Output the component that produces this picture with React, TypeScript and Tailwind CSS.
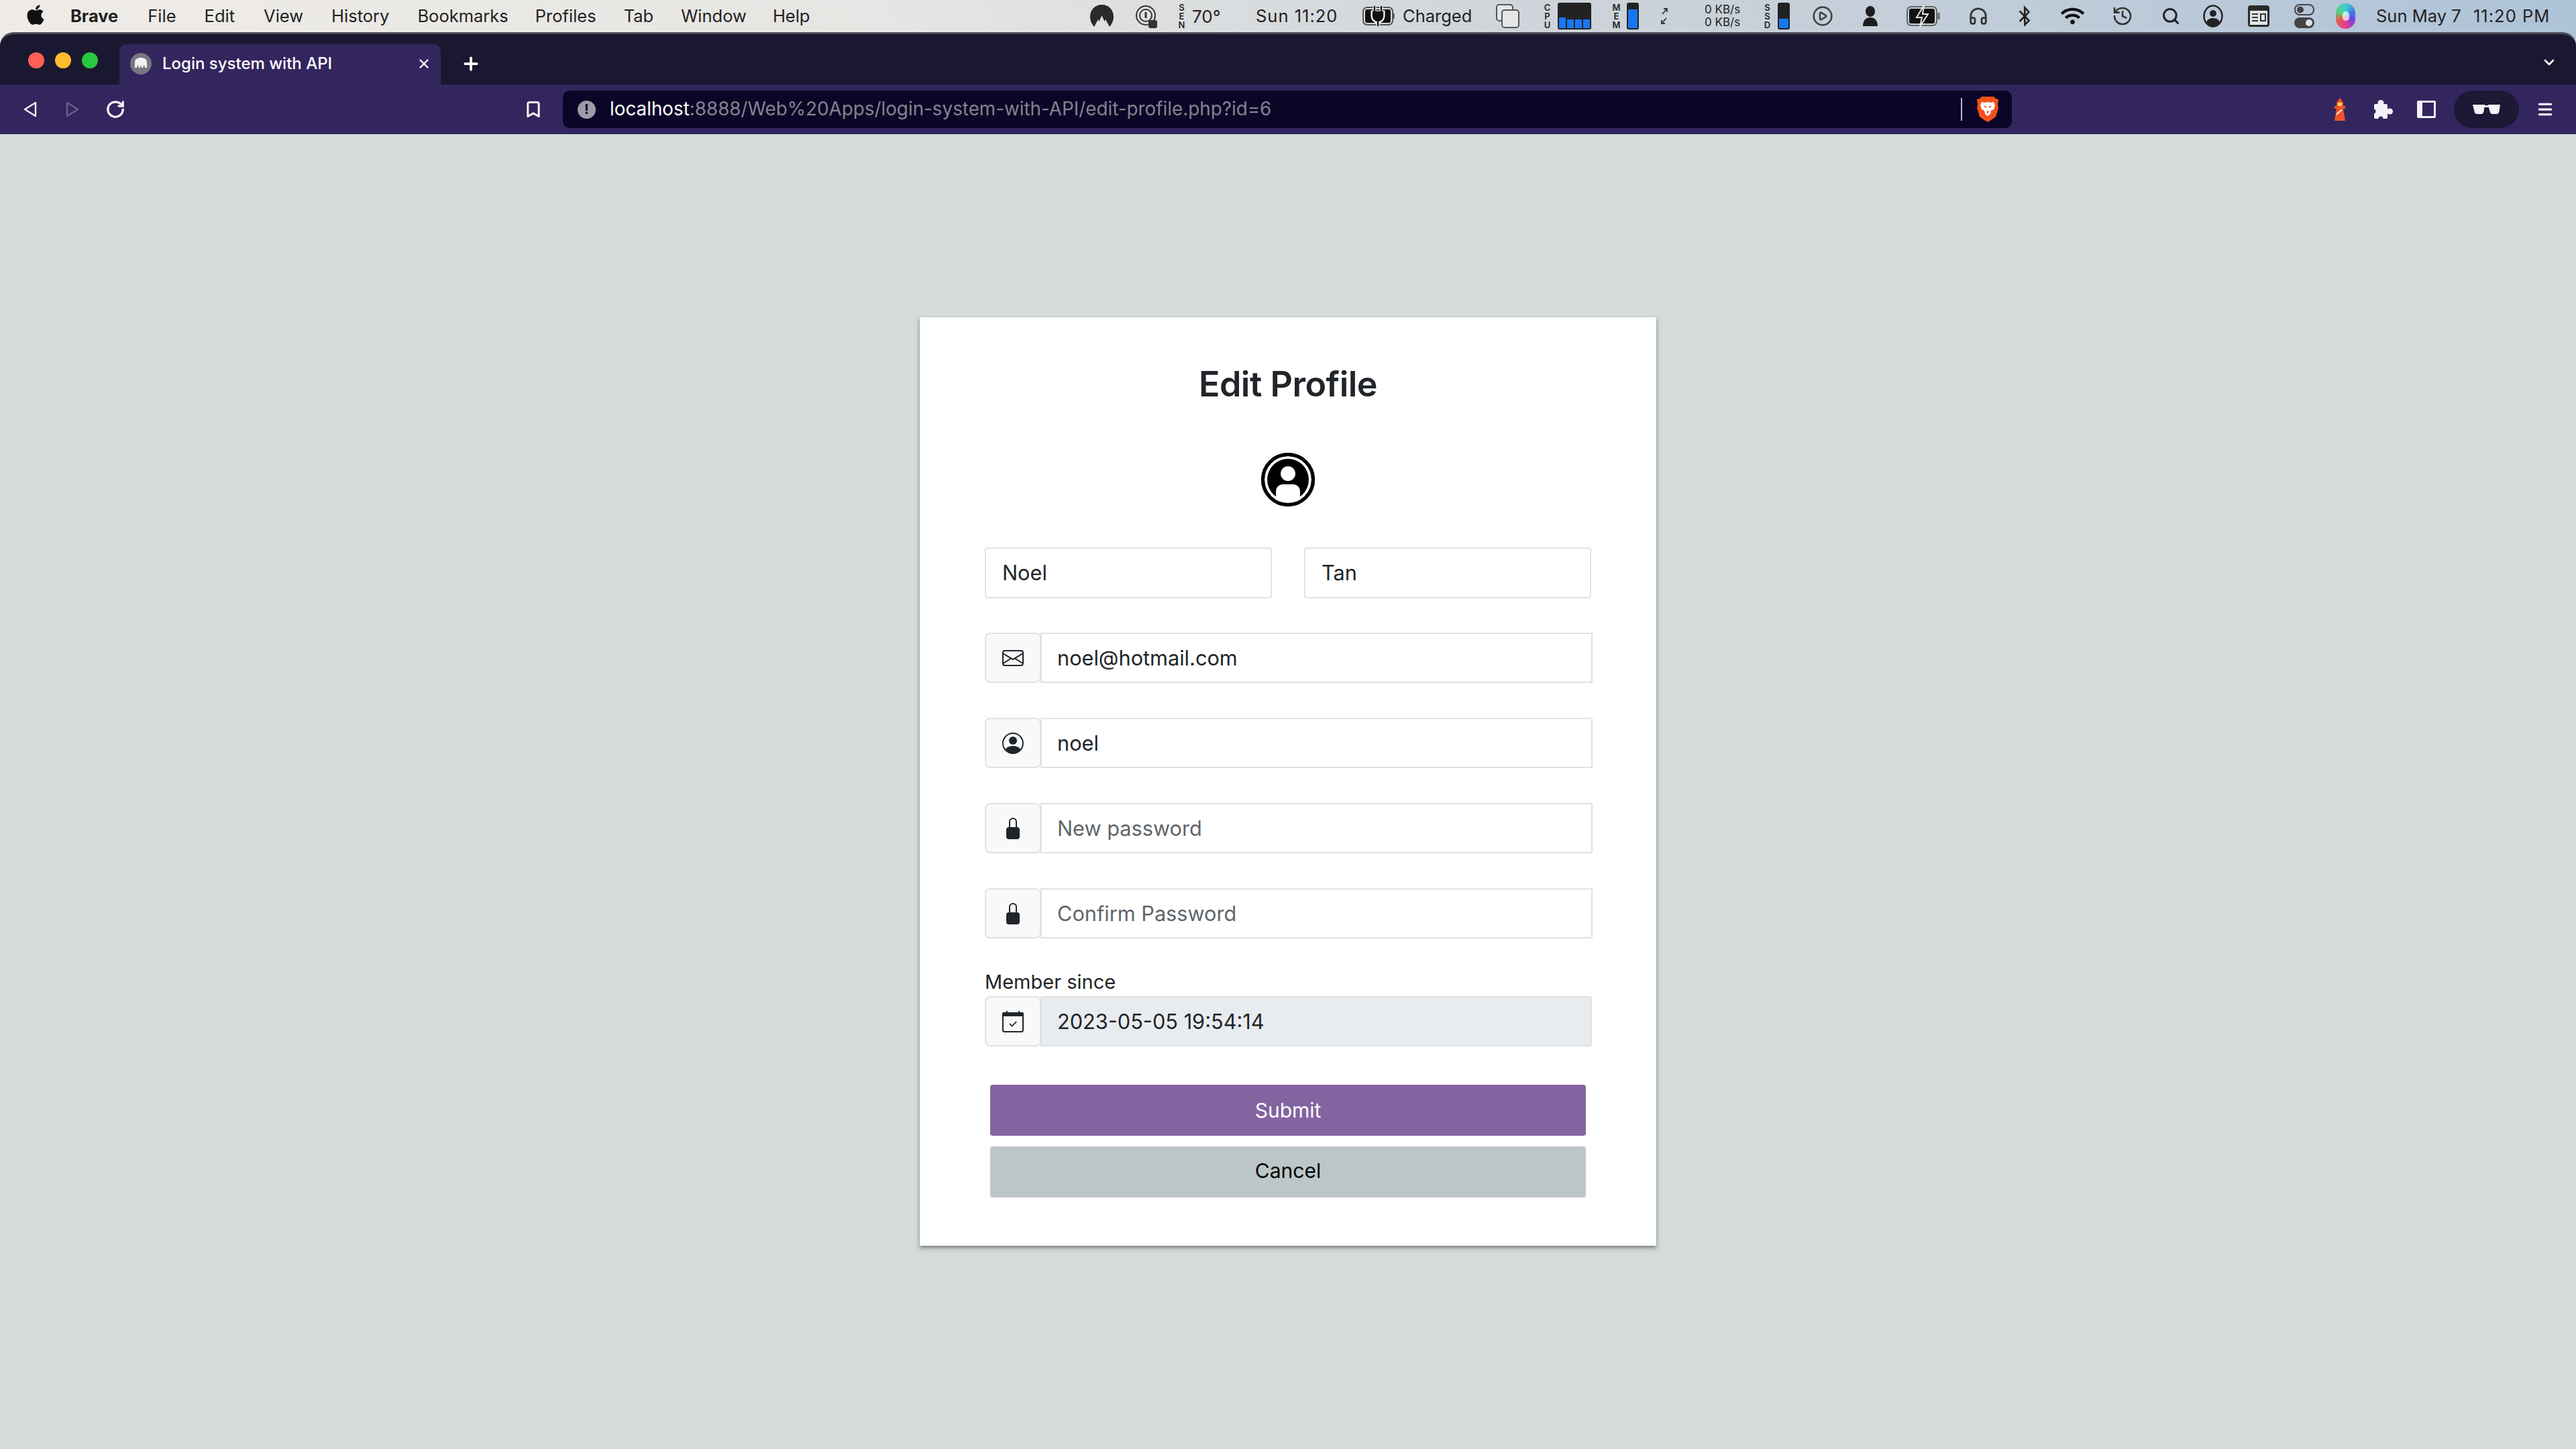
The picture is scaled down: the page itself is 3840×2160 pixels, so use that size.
import React from "react";
import { FaApple, FaWifi, FaBluetoothB } from "react-icons/fa";
import { BsEnvelope, BsPersonCircle, BsLockFill } from "react-icons/bs";
import { CirclePlay, Headphones, History, Search, Plus, X, ChevronDown, RotateCw, Bookmark, Menu } from "lucide-react";

const font = "font-['Inter','Liberation_Sans',sans-serif]";

function StackLabel({ letters, className }: { letters: string; className?: string }) {
  return (
    <div className={"w-[11px] flex flex-col items-center text-[13px] leading-[13px] font-semibold text-[#222] " + (className ?? "")}>
      {letters.split("").map((l, i) => (
        <span key={i}>{l}</span>
      ))}
    </div>
  );
}

function Bar({ className, fill }: { className?: string; fill: string }) {
  return (
    <div className={"w-[18px] h-[40px] bg-[#222] rounded-[3px] flex flex-col justify-end p-[2px] " + (className ?? "")}>
      <div className={"w-full bg-[#1677f2] " + fill} />
    </div>
  );
}

function MenuBar() {
  const items: [string, string][] = [
    ["File", "ml-[44px]"],
    ["Edit", "ml-[42px]"],
    ["View", "ml-[43px]"],
    ["History", "ml-[42px]"],
    ["Bookmarks", "ml-[42px]"],
    ["Profiles", "ml-[40px]"],
    ["Tab", "ml-[41px]"],
    ["Window", "ml-[41px]"],
    ["Help", "ml-[39px]"],
  ];
  return (
    <div className="h-[48px] flex items-center justify-between text-[25.5px] text-[#222] whitespace-nowrap">
      <div className="flex items-center pl-[38px]">
        <FaApple className="w-[30px] h-[34px] text-[#111] mb-[4px]" />
        <span className="ml-[37px] font-bold">Brave</span>
        {items.map(([t, m]) => (
          <span key={t} className={m}>
            {t}
          </span>
        ))}
      </div>
      <div className="flex items-center pr-[38px]">
        <svg viewBox="0 0 37 36" className="w-[37px] h-[36px]">
          <path d="M18.5 1C8 1 1 9 1 19c0 6 2.5 11 6 15l6-11 1.5 3 4-9 4 9 1.5-3 6 11c3.500-4 6-9 6-15C36 9 29 1 18.500 1z" fill="#2a2a2a" />
        </svg>
        <svg viewBox="0 0 32 36" className="ml-[32px] w-[32px] h-[36px]" fill="none" stroke="#333" strokeWidth="2">
          <circle cx="15" cy="17" r="14" />
          <circle cx="15" cy="17" r="9" />
          <path d="M15 12v9" strokeWidth="3" />
          <rect x="20" y="25" width="11" height="10" rx="2" fill="#333" />
        </svg>
        <StackLabel letters="SEN" className="ml-[31px]" />
        <span className="ml-[10px] w-[44px] text-[26px]">70°</span>
        <span className="ml-[51px] w-[125px] tracking-[1px]">Sun 11:20</span>
        <svg viewBox="0 0 50 32" className="ml-[34px] w-[50px] h-[32px]">
          <rect x="1" y="3" width="44" height="26" rx="6" fill="none" stroke="#555" strokeWidth="2" />
          <rect x="4" y="6" width="38" height="20" rx="3" fill="#111" />
          <path d="M18 1v9M28 1v9M15 10h16v6a8 8 0 0 1-16 0zM23 22v9" stroke="#fff" strokeWidth="5" fill="none" />
          <path d="M18 1v9M28 1v9M16 10h14v6a7 7 0 0 1-14 0zM23 22v9" stroke="#111" strokeWidth="2.500" fill="#111" />
          <path d="M47 12v8" stroke="#666" strokeWidth="2" />
        </svg>
        <span className="ml-[10px] w-[103px]">Charged</span>
        <svg viewBox="0 0 35 36" className="ml-[36px] w-[35px] h-[36px]" fill="#e4e6e8" stroke="#555" strokeWidth="2">
          <rect x="1" y="1" width="24" height="24" rx="4" />
          <rect x="9" y="9" width="25" height="26" rx="4" />
        </svg>
        <StackLabel letters="CPU" className="ml-[36px]" />
        <div className="ml-[10px] w-[50px] h-[40px] bg-[#222] rounded-[3px] flex items-end gap-[2px] p-[2px]">
          <div className="flex-1 h-[16px] bg-[#1677f2]" />
          <div className="flex-1 h-[13px] bg-[#1677f2]" />
          <div className="flex-1 h-[13px] bg-[#1677f2]" />
          <div className="flex-1 h-[13px] bg-[#1677f2]" />
        </div>
        <StackLabel letters="MEM" className="ml-[32px]" />
        <Bar className="ml-[10px]" fill="h-[28px]" />
        <svg viewBox="0 0 12 26" className="ml-[32px] w-[12px] h-[26px]" fill="none" stroke="#333" strokeWidth="1.800">
          <path d="M3 10L10 2M5 2h5v5M9 16L2 24M2 19v5h5" />
        </svg>
        <div className="ml-[54px] w-[56px] flex flex-col text-[17px] leading-[19px] text-[#222] whitespace-nowrap">
          <span>0 KB/s</span>
          <span>0 KB/s</span>
        </div>
        <StackLabel letters="SSD" className="ml-[32px]" />
        <Bar className="ml-[10px]" fill="h-[14px]" />
        <CirclePlay className="ml-[33px] w-[32px] h-[32px] text-[#444]" strokeWidth={2} />
        <svg viewBox="0 0 24 32" className="ml-[43px] w-[24px] h-[32px]" fill="#1c1c1c">
          <ellipse cx="12" cy="9" rx="7" ry="8" />
          <path d="M1 31c0-8 4-13 11-13s11 5 11 13z" />
        </svg>
        <svg viewBox="0 0 52 34" className="ml-[42px] w-[52px] h-[34px]">
          <rect x="1" y="3" width="44" height="28" rx="6" fill="none" stroke="#666" strokeWidth="2" />
          <rect x="4" y="6" width="38" height="22" rx="3" fill="#111" />
          <path d="M26 1L15 19h8l-3 14 12-19h-8z" fill="#111" stroke="#e2e4e6" strokeWidth="2" />
          <path d="M48 12v10" stroke="#666" strokeWidth="3" />
        </svg>
        <Headphones className="ml-[40px] w-[30px] h-[34px] text-[#333]" strokeWidth={2.2} />
        <FaBluetoothB className="ml-[44px] w-[20px] h-[34px] text-[#222]" />
        <FaWifi className="ml-[44px] w-[35px] h-[30px] text-[#111]" />
        <History className="ml-[41px] w-[32px] h-[34px] text-[#333]" strokeWidth={2} />
        <Search className="ml-[42px] w-[28px] h-[30px] text-[#222]" strokeWidth={2.6} />
        <svg viewBox="0 0 30 34" className="ml-[34px] w-[30px] h-[34px]">
          <ellipse cx="15" cy="17" rx="13.500" ry="15.500" fill="none" stroke="#222" strokeWidth="2.500" />
          <circle cx="15" cy="13" r="5" fill="#222" />
          <path d="M5 26c2-5 6-6 10-6s8 1 10 6c-3 4-7 6-10 6s-7-2-10-6z" fill="#222" />
        </svg>
        <svg viewBox="0 0 32 34" className="ml-[37px] w-[32px] h-[34px]">
          <rect x="0" y="1" width="32" height="32" rx="4" fill="#2a2a2a" />
          <rect x="3" y="9" width="26" height="21" fill="#dfe4e8" />
          <path d="M6 14h9M6 19h9M6 24h9M19 14h7v10h-7z" stroke="#333" strokeWidth="2" fill="none" />
        </svg>
        <svg viewBox="0 0 30 38" className="ml-[37px] w-[30px] h-[38px]">
          <rect x="1" y="2" width="28" height="15" rx="7" fill="none" stroke="#444" strokeWidth="2" />
          <circle cx="9" cy="9.500" r="5" fill="#444" />
          <rect x="0" y="21" width="30" height="16" rx="8" fill="#444" />
          <circle cx="22" cy="29" r="5" fill="#dfe4e8" />
        </svg>
        <div className="ml-[32px] w-[29px] h-[38px] rounded-full bg-[conic-gradient(#3fd0c8,#3a7bea,#7a3fe0,#e0408f,#e85a4f,#5ad07a,#3fd0c8)] flex items-center justify-center">
          <div className="w-[10px] h-[14px] rounded-full bg-white/70" />
        </div>
        <span className="ml-[31px] w-[127px]">Sun May 7</span>
        <span className="ml-[18px] w-[115px] tracking-[1px]">11:20 PM</span>
      </div>
    </div>
  );
}

function BrowserChrome() {
  return (
    <div className="rounded-t-[20px] overflow-hidden border-t-[3px] border-[#4b4a55]">
      <div className="h-[75px] bg-[#1a1830] flex items-end relative">
        <div className="flex items-center gap-[16px] pl-[42px] h-[75px] pb-[24px] pt-[27px]">
          <div className="w-[24px] h-[24px] rounded-full bg-[#fe5f57]" />
          <div className="w-[24px] h-[24px] rounded-full bg-[#febc2e]" />
          <div className="w-[24px] h-[24px] rounded-full bg-[#28c840]" />
        </div>
        <div className="ml-[32px] w-[479px] h-[60px] bg-[#33265e] rounded-t-[10px] flex items-center pl-[16px] pr-[14px] pb-[2px] text-white text-[24px] font-medium">
          <svg viewBox="0 0 32 32" className="w-[32px] h-[32px] shrink-0">
            <circle cx="16" cy="16" r="16" fill="#77787f" />
            <path d="M7 22V14c0-5 4-7 9-7s9 2 9 7v8h-3l-1-5-2 5h-2l-1-5-1 5h-2l-2-5-1 5z" fill="#f2f2f2" />
          </svg>
          <span className="ml-[16px] whitespace-nowrap">Login system with API</span>
          <X className="ml-auto w-[22px] h-[22px] text-white" strokeWidth={2.6} />
        </div>
        <Plus className="ml-[30px] mb-[16px] w-[30px] h-[30px] text-white self-end" strokeWidth={3} />
        <ChevronDown className="ml-auto mr-[28px] mb-[21px] w-[24px] h-[24px] text-white" strokeWidth={2.6} />
      </div>
      <div className="h-[74px] bg-[#33265e] flex items-center">
        <svg viewBox="0 0 20 24" className="ml-[35px] w-[20px] h-[24px]" fill="none" stroke="#f3f2f6" strokeWidth="2.400" strokeLinejoin="round">
          <path d="M18 2v20L2 12z" />
        </svg>
        <svg viewBox="0 0 20 24" className="ml-[43px] w-[20px] h-[24px]" fill="none" stroke="#6a5f8e" strokeWidth="2.400" strokeLinejoin="round">
          <path d="M2 2v20l16-10z" />
        </svg>
        <RotateCw className="ml-[39px] w-[30px] h-[30px] text-[#f3f2f6]" strokeWidth={2.6} />
        <Bookmark className="ml-[594px] w-[28px] h-[30px] text-[#f3f2f6]" strokeWidth={2.6} />
        <div className="ml-[30px] w-[2160px] h-[56px] bg-[#0b0627] rounded-[10px] flex items-center pl-[22px]">
          <div className="w-[27px] h-[27px] rounded-full bg-[#9b9ca6] flex items-center justify-center text-[#0b0627] text-[20px] font-bold leading-none">!</div>
          <span className="ml-[21px] text-[27.8px] whitespace-nowrap">
            <span className="text-white">localhost</span>
            <span className="text-[#86828f]">:8888/Web%20Apps/login-system-with-API/edit-profile.php?id=6</span>
          </span>
          <div className="ml-auto w-[2px] h-[34px] bg-[#b9b7c0]" />
          <svg viewBox="0 0 34 40" className="ml-[21px] mr-[19px] w-[34px] h-[40px]">
            <path d="M8 1h18l3 3 4 1-1 8 1 5-4 13-7 5-5 3-5-3-7-5L1 18l1-5-1-8 4-1z" fill="#f1511b" />
            <path d="M8 9l5 1 4-1 4 1 5-1 2 5-2 6-4 2-1 5-4 3-4-3-1-5-4-2-2-6z" fill="#fff" />
            <path d="M12 15l3 2M22 15l-3 2M17 22v4" stroke="#f1511b" strokeWidth="2" />
          </svg>
        </div>
        <svg viewBox="0 0 22 34" className="ml-[478px] w-[22px] h-[34px]">
          <path d="M11 0l5 7v5h3v4h-3l3 18H3l3-18H3v-4h3V7z" fill="#f4522a" />
          <rect x="8" y="7" width="6" height="5" fill="#f5d75a" />
          <path d="M15 18l-9 8v-3l7-6z" fill="#f8e6df" />
        </svg>
        <svg viewBox="0 0 30 28" className="ml-[38px] w-[30px] h-[28px]" fill="#f3f2f6">
          <rect x="2" y="6" width="20" height="22" rx="2" />
          <circle cx="12" cy="4.500" r="4.500" />
          <circle cx="25.500" cy="17" r="4.500" />
          <circle cx="1" cy="17" r="3.500" fill="#33265e" />
          <circle cx="12" cy="28" r="3.500" fill="#33265e" />
        </svg>
        <div className="ml-[36px] w-[28px] h-[26px] border-[3px] border-[#f3f2f6] border-l-[8px] rounded-[2px]" />
        <div className="ml-[27px] w-[97px] h-[56px] rounded-full bg-[#1c1836] flex items-center justify-center">
          <svg viewBox="0 0 41 14" className="w-[41px] h-[14px]" fill="#f3f2f6">
            <path d="M0 0h18l-1.500 10c-.3 2.500-2 4-4 4h-6c-2 0-3.700-1.500-4-4z" />
            <path d="M23 0h18l-1.500 10c-.3 2.500-2 4-4 4h-6c-2 0-3.700-1.500-4-4z" />
            <rect x="16" y="1" width="9" height="3" />
          </svg>
        </div>
        <Menu className="ml-[26px] w-[26px] h-[30px] text-[#f3f2f6]" strokeWidth={3} />
      </div>
    </div>
  );
}

function Group({ icon, children, disabled, muted, mt }: { icon: React.ReactNode; children: React.ReactNode; disabled?: boolean; muted?: boolean; mt: string }) {
  return (
    <div className={"flex h-[75px] " + mt}>
      <div className="w-[84px] shrink-0 rounded-[8px] border-2 border-[#dee2e6] bg-[#f8f9fa] flex items-center justify-center text-[#212529]">
        {icon}
      </div>
      <div
        className={
          "-ml-px flex items-center pl-[23px] pt-[1px] text-[30.7px] border-2 border-[#dee2e6] " +
          (disabled ? "w-[822px] bg-[#e9ecef] rounded-r-[4px] " : "w-[823px] bg-white ") +
          (muted ? "text-[#5f656b]" : "text-[#212529]")
        }
      >
        {children}
      </div>
    </div>
  );
}

function Card() {
  const calendar = (
    <svg viewBox="0 0 16 16" className="w-[32px] h-[32px]" fill="none" stroke="currentColor">
      <rect x="0.5" y="1.500" width="15" height="14" rx="1.200" />
      <path d="M1 1h14a1 1 0 0 1 1 1v2H0V2a1 1 0 0 1 1-1z" fill="currentColor" stroke="none" />
      <path d="M3.500 0v2M12.500 0v2" />
      <path d="M5.600 9.600l1.700 1.700 3.300-3.300" strokeWidth="0.900" />
    </svg>
  );
  return (
    <div className="w-[1098px] h-[1384px] mx-auto bg-white shadow-[0_3px_6px_rgba(0,0,0,0.45)] pt-[76px] pl-[97px]">
      <h1 className="h-[48px] w-[904px] flex items-center justify-center text-[52px] font-semibold text-[#212529] tracking-[-0.5px]">Edit Profile</h1>
      <div className="mt-[78px] w-[904px] flex justify-center">
        <svg viewBox="0 0 80 80" className="w-[80px] h-[80px]">
          <circle cx="40" cy="40" r="37.500" fill="#fff" stroke="#000" strokeWidth="5" />
          <circle cx="40" cy="40" r="31" fill="#000" />
          <circle cx="40" cy="31" r="11" fill="#fff" />
          <path d="M22 74V57a10 10 0 0 1 10-10h16a10 10 0 0 1 10 10v17z" fill="#fff" />
          <circle cx="40" cy="40" r="37.500" fill="none" stroke="#000" strokeWidth="5" />
        </svg>
      </div>
      <div className="mt-[61px] flex gap-[48px] w-[904px]">
        <div className="w-[428px] h-[76px] border-2 border-[#dee2e6] rounded-[4px] flex items-center pl-[24px] pt-[1px] text-[30.7px] text-[#212529]">Noel</div>
        <div className="w-[428px] h-[76px] border-2 border-[#dee2e6] rounded-[4px] flex items-center pl-[24px] pt-[1px] text-[30.7px] text-[#212529]">Tan</div>
      </div>
      <Group mt="mt-[51px]" icon={<BsEnvelope className="w-[32px] h-[32px]" />}>noel@hotmail.com</Group>
      <Group mt="mt-[52px]" icon={<BsPersonCircle className="w-[32px] h-[32px]" />}>noel</Group>
      <Group mt="mt-[52px]" muted icon={<BsLockFill className="w-[32px] h-[32px]" />}>New password</Group>
      <Group mt="mt-[52px]" muted icon={<BsLockFill className="w-[32px] h-[32px]" />}>Confirm Password</Group>
      <div className="mt-[42px] h-[44px] flex items-start pt-[4px] text-[29px] leading-[38px] text-[#212529]">Member since</div>
      <Group mt="mt-0" disabled icon={calendar}>2023-05-05 19:54:14</Group>
      <div className="mt-[57px] ml-[8px] w-[888px] h-[76px] rounded-[4px] bg-[#8364a0] text-white text-[30px] flex items-center justify-center pt-[1px]">Submit</div>
      <div className="mt-[16px] ml-[8px] w-[888px] h-[76px] rounded-[4px] bg-[#bdc6c7] text-black text-[30px] flex items-center justify-center pb-[3px]">Cancel</div>
    </div>
  );
}

export default function App() {
  return (
    <div className={"w-[3840px] h-[2160px] overflow-hidden bg-[linear-gradient(90deg,#efece8_0%,#e6e5e3_35%,#ced4da_60%,#aec3d8_100%)] " + font}>
      <MenuBar />
      <BrowserChrome />
      <main className="h-[1960px] bg-[#d5dbdb] pt-[273px]">
        <Card />
      </main>
    </div>
  );
}
